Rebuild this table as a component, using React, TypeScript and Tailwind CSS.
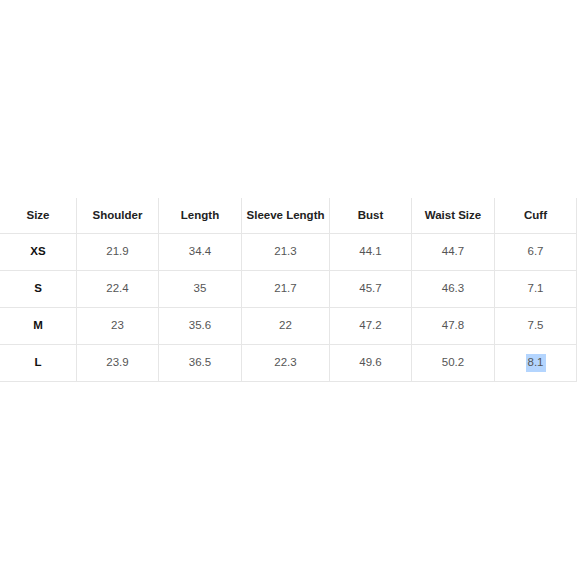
import React from 'react';

const headers = ['Size', 'Shoulder', 'Length', 'Sleeve Length', 'Bust', 'Waist Size', 'Cuff'];

const rows = [
  ['XS', '21.9', '34.4', '21.3', '44.1', '44.7', '6.7'],
  ['S', '22.4', '35', '21.7', '45.7', '46.3', '7.1'],
  ['M', '23', '35.6', '22', '47.2', '47.8', '7.5'],
  ['L', '23.9', '36.5', '22.3', '49.6', '50.2', '8.1'],
];

export default function App() {
  return (
    <div
      className="h-[580px] w-[580px] bg-white pt-[198px]"
      style={{ fontFamily: '"Liberation Sans", Arial, sans-serif' }}
    >
      <div className="grid w-[577px] grid-cols-[77px_82px_83px_88px_82px_83px_82px]">
        {headers.map((h) => (
          <div
            key={h}
            className="flex h-[36px] items-center justify-center border-r border-b border-[#e6e6e6] text-[11.5px] font-bold text-[#222]"
          >
            {h}
          </div>
        ))}
        {rows.map((row, ri) =>
          row.map((cell, ci) => (
            <div
              key={`${ri}-${ci}`}
              className={`flex h-[37px] items-center justify-center border-r border-b border-[#e6e6e6] text-[11.5px] ${
                ci === 0 ? 'font-bold text-[#111]' : 'text-[#555]'
              }`}
            >
              {ri === 3 && ci === 6 ? (
                <span className="flex h-[18px] items-center bg-[#b4d5fe] px-[2px]">{cell}</span>
              ) : (
                cell
              )}
            </div>
          ))
        )}
      </div>
    </div>
  );
}
